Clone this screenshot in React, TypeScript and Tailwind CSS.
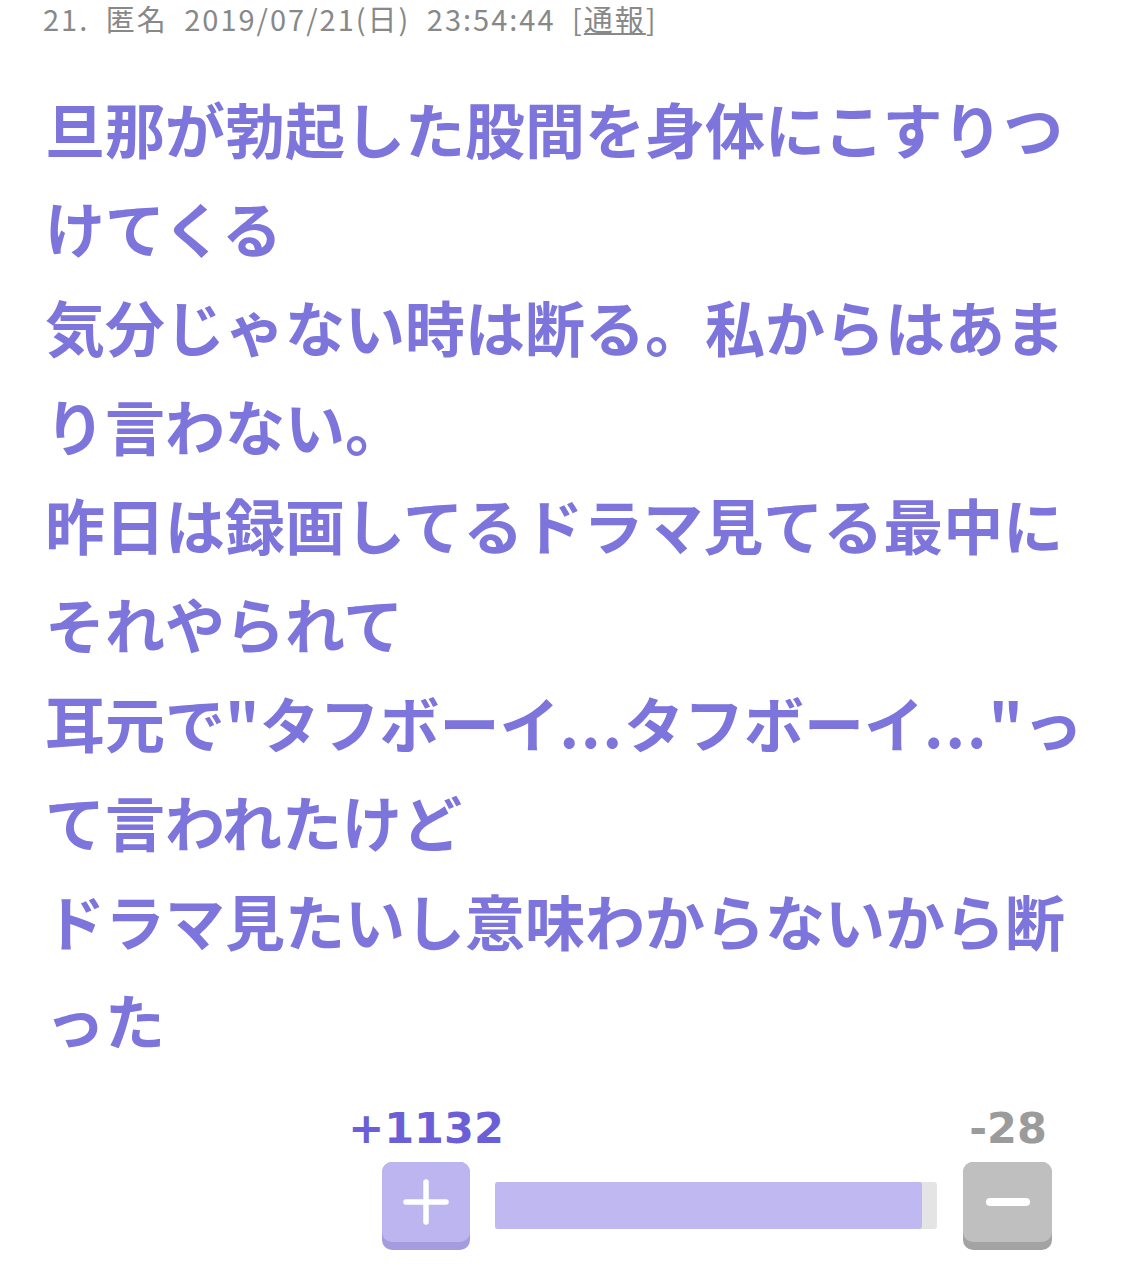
import React from "react";

const Dots = () => <span className="tracking-[2px]">...</span>;

const lines: React.ReactNode[] = [
  "旦那が勃起した股間を身体にこすりつ",
  "けてくる",
  "気分じゃない時は断る。私からはあま",
  "り言わない。",
  "昨日は録画してるドラマ見てる最中に",
  "それやられて",
  <>
    耳元で"タフボーイ<Dots />タフボーイ<Dots />"っ
  </>,
  "て言われたけど",
  "ドラマ見たいし意味わからないから断",
  "った",
];

export default function App() {
  return (
    <div className="w-[1125px] h-[1274px] bg-white overflow-hidden relative">
      <div
        className="pl-[43px] leading-[36px] text-[29px] tracking-[2px] [word-spacing:8px] text-[#888888] whitespace-nowrap"
        style={{ fontFamily: '"Noto Sans CJK JP", "Noto Sans", sans-serif' }}
      >
        21. 匿名 2019/07/21(日) 23:54:44 [<span className="underline">通報</span>]
      </div>
      <div
        className="mt-[42px] pl-[45px] text-[60px] leading-[99px] font-bold text-[#7d74dc]"
        style={{ fontFamily: '"Noto Sans CJK JP", sans-serif' }}
      >
        {lines.map((l, i) => (
          <div key={i} className="whitespace-nowrap">
            {l}
          </div>
        ))}
      </div>
      <div className="mt-[34px] pl-[382px] flex flex-col">
        <div
          className="flex items-end h-[48px] font-bold text-[43px] leading-none"
          style={{ fontFamily: '"DejaVu Sans", sans-serif' }}
        >
          <div className="w-[88px] flex justify-center text-[#6a5fd6] whitespace-nowrap">+1132</div>
          <div className="w-[493px]" />
          <div className="w-[90px] flex justify-center text-[#9b9b9b]">-28</div>
        </div>
        <div className="mt-[12px] flex items-start">
          <div className="w-[88px] h-[88px] rounded-[10px] bg-[#a59ce0] flex flex-col">
            <div className="h-[80px] rounded-[10px] bg-[#bdb5ef] flex items-center justify-center">
              <svg width="46" height="46" viewBox="0 0 46 46">
                <path d="M23 3 V43 M3 23 H43" stroke="white" strokeWidth="5.5" strokeLinecap="round" />
              </svg>
            </div>
          </div>
          <div className="ml-[25px] mt-[20px] w-[442px] h-[47px] bg-[#e4e4e4] rounded-[3px] flex">
            <div className="w-[427px] h-full bg-[#c0b8f0] rounded-[3px]" />
          </div>
          <div className="ml-[26px] w-[89px] h-[88px] rounded-[10px] bg-[#a3a3a3] flex flex-col">
            <div className="h-[80px] rounded-[10px] bg-[#bfbfbf] flex items-center justify-center">
              <div className="w-[44px] h-[8px] rounded-full bg-white" />
            </div>
          </div>
        </div>
      </div>
    </div>
  );
}
